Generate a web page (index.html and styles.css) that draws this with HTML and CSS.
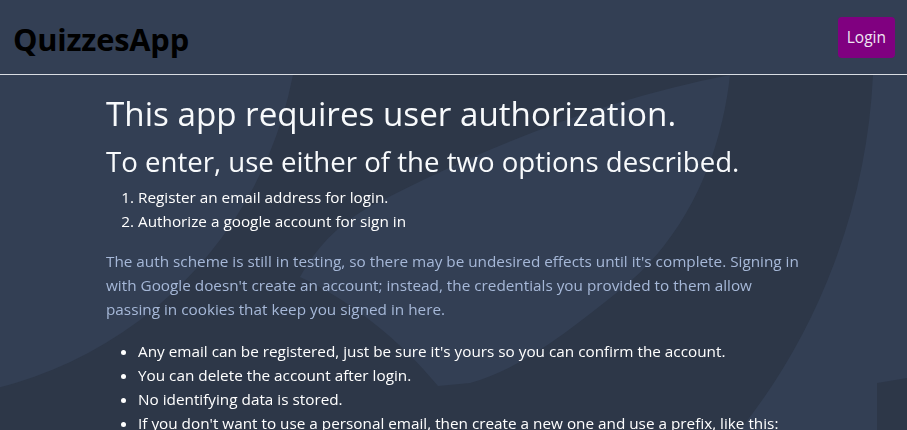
FILE: index.html
```html
<!DOCTYPE html>
<html lang="en">
<head>
<meta charset="utf-8">
<title>QuizzesApp</title>
<link rel="stylesheet" href="styles.css">
</head>
<body>
<svg class="backdrop" viewBox="0 0 907 430" preserveAspectRatio="none" aria-hidden="true">
  <rect class="shade-dark" x="0" y="0" width="907" height="430"/>
  <circle class="shade-light" cx="-100" cy="0" r="400"/>
  <path class="shade-light" d="M873,0 L873,75 A620,620 0 0 1 740,430 L907,430 L907,0 Z"/>
  <path class="shade-dark" d="M877,383 L907,378 L907,430 L877,430 Z"/>
  <path class="shade-light" d="M383,200 C480,150 600,100 730,75 C722,150 690,235 620,290 C570,330 520,370 470,383 L438,386 C400,340 350,300 300,277 C320,240 350,215 383,200 Z"/>
</svg>

<header class="topbar">
  <div class="brand">QuizzesApp</div>
  <button class="login-btn" type="button">Login</button>
</header>

<main class="content">
  <h1 class="title">This app requires user authorization.</h1>
  <h2 class="subtitle">To enter, use either of the two options described.</h2>
  <ol class="options">
    <li>Register an email address for login.</li>
    <li>Authorize a google account for sign in</li>
  </ol>
  <p class="note">The auth scheme is still in testing, so there may be undesired effects until it's complete. Signing in with Google doesn't create an account; instead, the credentials you provided to them allow passing in cookies that keep you signed in here.</p>
  <ul class="points">
    <li>Any email can be registered, just be sure it's yours so you can confirm the account.</li>
    <li>You can delete the account after login.</li>
    <li>No identifying data is stored.</li>
    <li>If you don't want to use a personal email, then create a new one and use a prefix, like this:</li>
  </ul>
</main>
</body>
</html>
```

FILE: styles.css
```css
html, body {
  margin: 0;
  padding: 0;
  height: 100%;
  overflow: hidden;
}

body {
  background: #2d3748;
  font-family: "Open Sans", "Noto Sans", sans-serif;
  color: #f5f7fa;
}

.backdrop {
  position: fixed;
  top: 0;
  left: 0;
  width: 100%;
  height: 100%;
  z-index: 0;
  pointer-events: none;
}

.shade-light { fill: #333f54; }
.shade-dark { fill: #2d3748; }

.topbar {
  position: relative;
  z-index: 1;
  box-sizing: border-box;
  height: 75px;
  border-bottom: 1px solid #d9dde3;
  background: #333f54;
  display: flex;
  align-items: center;
  justify-content: space-between;
  padding: 0 12px 0 13px;
}

.brand {
  font-size: 30.8px;
  font-weight: 700;
  color: #000;
  line-height: 40px;
  letter-spacing: -0.2px;
  margin-top: 3px;
}

.login-btn {
  font-family: inherit;
  font-size: 15.5px;
  line-height: 23px;
  padding: 9px 9px;
  border: none;
  border-radius: 4px;
  background: #800080;
  color: #efe6f2;
  margin-top: 1px;
}

.content {
  position: relative;
  z-index: 1;
  width: 695px;
  margin: 0 auto;
  padding-top: 19px;
}

.title {
  margin: 0;
  font-size: 33.2px;
  font-weight: 400;
  line-height: 40px;
  color: #f8fafc;
}

.subtitle {
  margin: 9px 0 0;
  font-size: 27.6px;
  font-weight: 400;
  line-height: 36px;
  color: #f8fafc;
}

.options,
.points {
  margin: 0;
  padding-left: 32px;
  font-size: 15.3px;
  line-height: 24px;
  color: #ffffff;
}

.options {
  margin-top: 6px;
}

.note {
  margin: 16px 0 18px;
  font-size: 15.3px;
  line-height: 24px;
  color: #a6b8d8;
}
```
